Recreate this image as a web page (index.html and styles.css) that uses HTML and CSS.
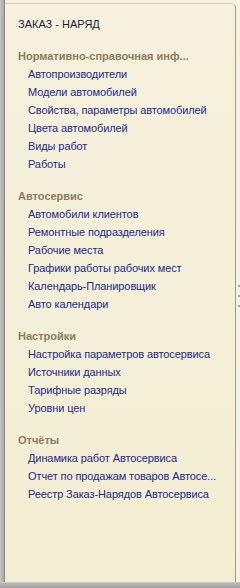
FILE: index.html
```html
<!DOCTYPE html>
<html lang="ru">
<head>
	<meta charset="UTF-8">
	<title>Заказ - наряд</title>
	<link rel="stylesheet" href="styles.css">
</head>
<body>
	<div class="frame">
		<div class="edge-left"></div>
		<div class="panel">
			<div class="title">ЗАКАЗ - НАРЯД</div>

			<div class="section">
				<div class="section-title">Нормативно-справочная инф...</div>
				<a class="item">Автопроизводители</a>
				<a class="item">Модели автомобилей</a>
				<a class="item">Свойства, параметры автомобилей</a>
				<a class="item">Цвета автомобилей</a>
				<a class="item">Виды работ</a>
				<a class="item">Работы</a>
			</div>

			<div class="section">
				<div class="section-title">Автосервис</div>
				<a class="item">Автомобили клиентов</a>
				<a class="item">Ремонтные подразделения</a>
				<a class="item">Рабочие места</a>
				<a class="item">Графики работы рабочих мест</a>
				<a class="item">Календарь-Планировщик</a>
				<a class="item">Авто календари</a>
			</div>

			<div class="section">
				<div class="section-title">Настройки</div>
				<a class="item">Настройка параметров автосервиса</a>
				<a class="item">Источники данных</a>
				<a class="item">Тарифные разряды</a>
				<a class="item">Уровни цен</a>
			</div>

			<div class="section">
				<div class="section-title">Отчёты</div>
				<a class="item">Динамика работ Автосервиса</a>
				<a class="item">Отчет по продажам товаров Автосе...</a>
				<a class="item">Реестр Заказ-Нарядов Автосервиса</a>
			</div>
		</div>
		<div class="splitter">
			<span class="grip"></span>
			<span class="grip"></span>
			<span class="grip"></span>
		</div>
	</div>
	<div class="edge-bottom"></div>
</body>
</html>
```

FILE: styles.css
```css
body {
	margin: 0;
	width: 240px;
	height: 588px;
	overflow: hidden;
	background: #f6f2e2;
	font-family: "Liberation Sans", Arial, sans-serif;
	font-size: 11px;
	display: flex;
	flex-direction: column;
}

.frame {
	display: flex;
	height: 582px;
}

.edge-left {
	width: 4px;
	background: linear-gradient(to right, #c4c4c4, #a8a8a8);
	border-right: 1px solid #8a8a8a;
}

.panel {
	flex: 1;
	margin-top: 3px;
	padding: 11px 0 0 13px;
	background: linear-gradient(to bottom, #f5f1de, #f3edd3);
	border-top: 1px solid #d9d1b3;
	border-right: 1px solid #a49c80;
	border-top-right-radius: 5px;
	display: flex;
	flex-direction: column;
}

.title {
	line-height: 18px;
	color: #1c1c3c;
	margin-bottom: 15px;
}

.section {
	display: flex;
	flex-direction: column;
	margin-bottom: 15px;
}

.section-title {
	line-height: 17px;
	font-weight: bold;
	color: #8a7c5c;
	white-space: nowrap;
}

.item {
	line-height: 18px;
	padding-left: 10px;
	color: #1d2a88;
	white-space: nowrap;
	letter-spacing: -0.1px;
	cursor: pointer;
}

.splitter {
	width: 4px;
	display: flex;
	flex-direction: column;
	align-items: flex-end;
	justify-content: center;
	gap: 8px;
	padding-top: 10px;
}

.grip {
	width: 2px;
	height: 2px;
	background: #a8a8a0;
}

.edge-bottom {
	flex: 1;
	background: linear-gradient(to bottom, #b8b8b8, #a0a0a0);
	border-top: 1px solid #c8c8c8;
}
```
